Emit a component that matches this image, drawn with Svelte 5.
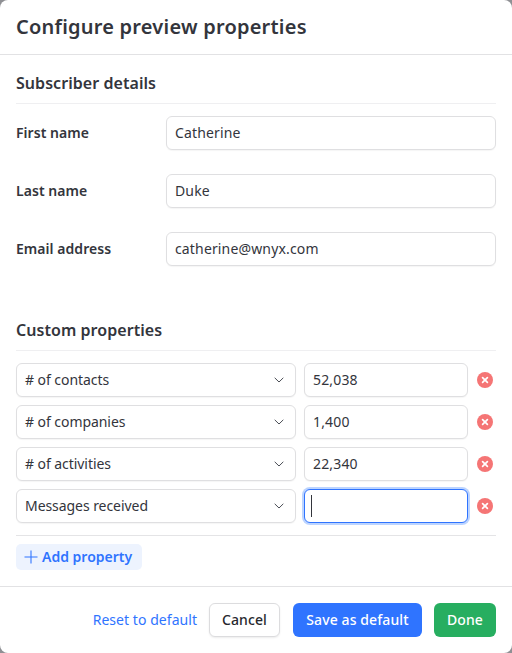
<script>
  const fields = [
    { label: 'First name', value: 'Catherine' },
    { label: 'Last name', value: 'Duke' },
    { label: 'Email address', value: 'catherine@wnyx.com' }
  ];
  const props = [
    { name: '# of contacts', value: '52,038' },
    { name: '# of companies', value: '1,400' },
    { name: '# of activities', value: '22,340' },
    { name: 'Messages received', value: '', focus: true }
  ];
</script>

<div class="page">
  <div class="modal">
    <header class="head"><h1>Configure preview properties</h1></header>
    <main class="body">
      <section class="details">
        <h2>Subscriber details</h2>
        <div class="fields">
          {#each fields as f}
            <div class="field">
              <span class="label">{f.label}</span>
              <div class="input wide"><span class="txt">{f.value}</span></div>
            </div>
          {/each}
        </div>
      </section>
      <section class="custom">
        <h2>Custom properties</h2>
        <div class="rows">
          {#each props as p}
            <div class="row">
              <div class="input select">
                <span class="txt name">{p.name}</span>
                <svg width="10" height="6" viewBox="0 0 10 6" fill="none"><path d="M.7.8 5 5 9.3.8" stroke="#4a4d55" stroke-width="1"/></svg>
              </div>
              <div class="input val" class:focus={p.focus}><span class="txt">{p.value}</span>{#if p.focus}<i class="caret"></i>{/if}</div>
              <svg class="remove" width="16" height="16" viewBox="0 0 16 16"><circle cx="8" cy="8" r="8" fill="#f57575"/><path d="M5.6 5.6l4.8 4.8M10.4 5.6l-4.8 4.8" stroke="#fff" stroke-width="1.7" stroke-linecap="round"/></svg>
            </div>
          {/each}
        </div>
        <div class="addwrap">
          <button class="add">
            <svg width="14" height="14" viewBox="0 0 14 14" fill="none"><path d="M7 .5v13M.5 7h13" stroke="#2f74ff" stroke-width="1.1"/></svg>
            <span>Add property</span>
          </button>
        </div>
      </section>
    </main>
    <footer class="foot">
      <a class="reset" href="#reset">Reset to default</a>
      <button class="btn cancel">Cancel</button>
      <button class="btn save">Save as default</button>
      <button class="btn done">Done</button>
    </footer>
  </div>
</div>

<style>
  :global(body) { margin: 0; background: #8f9094; }
  * { box-sizing: border-box; }
  .page { width: 512px; height: 653px; font-family: "Noto Sans", sans-serif; color: #33353c; }
  .modal { width: 512px; height: 653px; background: #fff; border-radius: 8px; display: flex; flex-direction: column; overflow: hidden; }
  .head { height: 55px; padding: 0 16px; display: flex; align-items: center; border-bottom: 1px solid #e2e2e4; }
  h1 { margin: 0; font-size: 20px; font-weight: 600; line-height: 28px; letter-spacing: .22px; }
  .body { flex: 1; padding: 16px 16px 0; }
  h2 { margin: 0; font-size: 16px; font-weight: 600; line-height: 25px; padding-bottom: 7px; border-bottom: 1px solid #efeff1; height: 33px; letter-spacing: .05px; }
  .fields { padding-top: 12px; display: flex; flex-direction: column; gap: 24px; }
  .field { display: flex; align-items: center; }
  .label { width: 150px; font-size: 14px; font-weight: 600; line-height: 20px; margin-top: -1px; letter-spacing: .05px; }
  .input { height: 34px; border: 1px solid #dfdfe1; border-radius: 6px; background: #fff; font-size: 14px; padding: 0 8px; display: flex; align-items: center; box-shadow: 0 1px 1px rgba(0,0,0,.04); }
  .txt { position: relative; top: -1px; letter-spacing: .15px; }
  .name { letter-spacing: -.06px; }
  .wide { width: 330px; }
  .custom { margin-top: 52px; }
  .rows { padding-top: 12px; display: flex; flex-direction: column; gap: 8px; }
  .row { display: flex; align-items: center; }
  .select { width: 280px; justify-content: space-between; padding-right: 11px; }
  .val { width: 164px; margin-left: 8px; }
  .val.focus { border-color: #2f74ff; box-shadow: 0 0 0 2px #bcd4ff; }
  .caret { display: block; width: 1px; height: 22px; background: #33353c; margin-left: -2px; }
  .remove { margin-left: 9px; }
  .addwrap { margin-top: 12px; padding-top: 8px; border-top: 1px solid #e4e4e6; }
  .add { height: 26px; width: 126px; border: 0; border-radius: 5px; background: #edf3fe; color: #2f74ff; font: 600 14px "Noto Sans", sans-serif; display: flex; align-items: center; gap: 4px; padding: 0 0 0 8px; }
  .add span { position: relative; top: -1px; }
  .foot { height: 67px; border-top: 1px solid #e2e2e4; padding: 0 16px; display: flex; align-items: center; justify-content: flex-end; }
  .reset { color: #2f74ff; font-size: 14px; text-decoration: none; margin-right: 12px; letter-spacing: .05px; position: relative; top: -1px; }
  .btn { height: 34px; border-radius: 6px; font: 500 14px "Noto Sans", sans-serif; border: 0; padding: 0 0 2px; letter-spacing: .1px; }
  .cancel { width: 71px; background: #fff; border: 1px solid #dcdcde; color: #26282e; box-shadow: 0 1px 2px rgba(0,0,0,.08); margin-right: 13px; }
  .save { width: 129px; background: #2f74ff; color: #fff; margin-right: 12px; }
  .done { width: 62px; background: #27ae60; color: #fff; }
</style>
